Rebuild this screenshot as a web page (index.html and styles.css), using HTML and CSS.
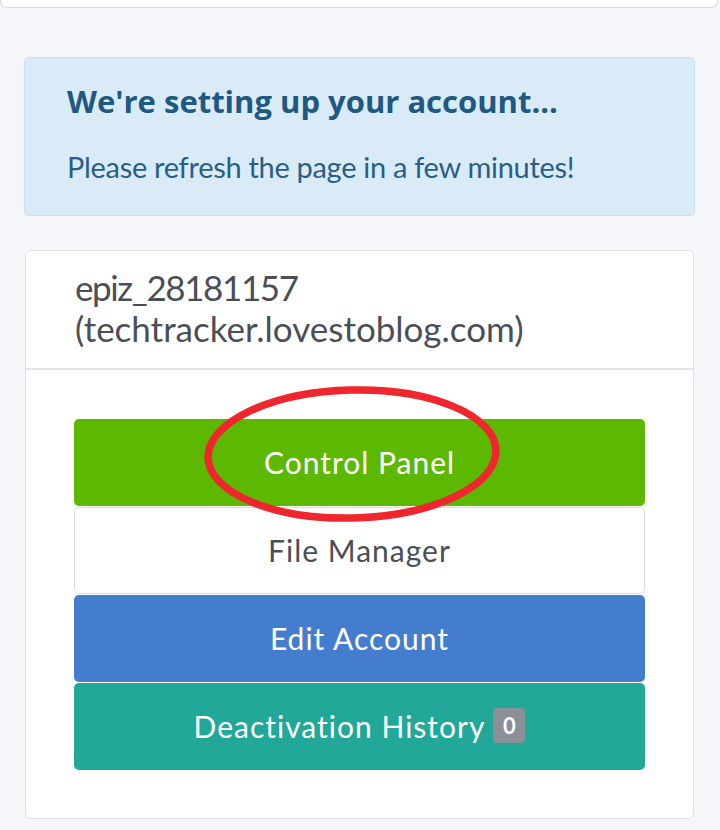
FILE: index.html
```html
<!DOCTYPE html>
<html lang="en">
<head>
<meta charset="utf-8">
<title>Account</title>
<link rel="stylesheet" href="styles.css">
</head>
<body>
<div class="top-card"></div>
<main class="page">
  <div class="alert">
    <h4 class="alert-title">We're setting up your account...</h4>
    <p class="alert-text">Please refresh the page in a few minutes!</p>
  </div>
  <section class="card">
    <div class="card-header"><span class="account-id">epiz_28181157</span><br>(techtracker.lovestoblog.com)</div>
    <div class="card-body">
      <div class="btn-stack">
        <a class="btn btn-green">Control Panel
          <svg class="circle" width="310" height="150" viewBox="0 0 310 150" aria-hidden="true">
            <ellipse cx="155" cy="75" rx="144" ry="64" fill="none" stroke="#f0262e" stroke-width="7.5" transform="rotate(-1.5 155 75)"/>
          </svg>
        </a>
        <a class="btn btn-white">File Manager</a>
        <a class="btn btn-blue">Edit Account</a>
        <a class="btn btn-teal">Deactivation History <span class="badge">0</span></a>
      </div>
    </div>
  </section>
</main>
</body>
</html>
```
FILE: styles.css
```css
* { box-sizing: border-box; }
html, body { margin: 0; padding: 0; }
body {
  background: #f4f6fa;
  font-family: Lato, "Open Sans", sans-serif;
  width: 720px;
  height: 830px;
  overflow: hidden;
}
.top-card {
  width: 718px;
  height: 8px;
  background: #fff;
  border: 1px solid #d6d8dc;
  border-top: none;
  border-radius: 0 0 7px 7px;
}
.page {
  padding: 49px 25px 0 24px;
}
.alert {
  background: #daebf8;
  border: 1px solid #c9e0f2;
  border-radius: 5px;
  height: 159px;
  padding: 23px 42px 0;
}
.alert-title {
  margin: 0;
  font-family: "Open Sans", Lato, sans-serif;
  font-size: 31px;
  font-weight: 700;
  color: #1f5881;
  line-height: 40px;
}
.alert-text {
  margin: 26px 0 0;
  font-size: 29px;
  color: #2a5e86;
  line-height: 40px;
  letter-spacing: -0.3px;
}
.card {
  margin: 34px 1px 0 1px;
  background: #fff;
  border: 1px solid #dde1e6;
  border-radius: 6px;
}
.card-header {
  padding: 16px 49px 19px;
  font-size: 35px;
  line-height: 41px;
  color: #4a4f56;
  border-bottom: 2px solid #e1e4e8;
}
.account-id {
  letter-spacing: -1.4px;
}
.card-body {
  padding: 49px 48px 48px;
}
.btn-stack {
  display: flex;
  flex-direction: column;
  gap: 1px;
}
.btn {
  position: relative;
  display: flex;
  align-items: center;
  justify-content: center;
  height: 87px;
  border-radius: 5px;
  font-size: 30px;
  letter-spacing: 1px;
  color: #fff;
  padding-bottom: 2px;
}
.btn-green { background: #5db802; }
.btn-white { background: #fff; border: 1px solid #d9dde2; color: #4a4f56; }
.btn-blue { background: #447dcd; }
.btn-teal { background: #21a898; }
.badge {
  display: inline-flex;
  align-items: center;
  justify-content: center;
  width: 32px;
  height: 35px;
  margin-left: 8px;
  background: #8a8f98;
  border-radius: 4px;
  font-size: 22px;
  font-weight: 700;
  letter-spacing: 0;
}
.circle {
  position: absolute;
  left: 123px;
  top: -40px;
  z-index: 5;
  pointer-events: none;
}
```
